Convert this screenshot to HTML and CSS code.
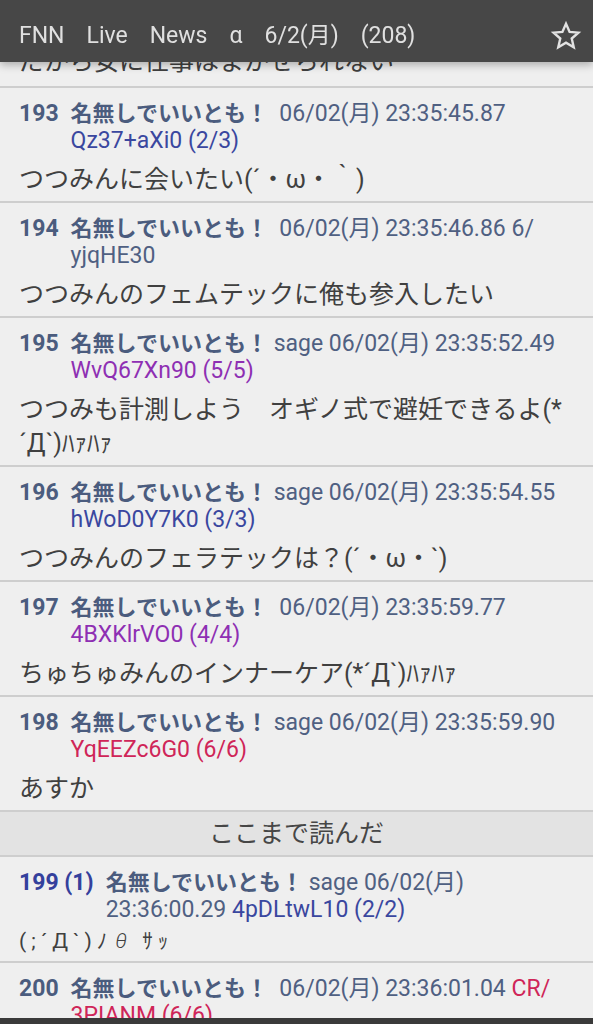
FILE: index.html
```html
<!DOCTYPE html>
<html lang="ja">
<head>
    <meta charset="UTF-8">
    <meta name="viewport" content="width=device-width, initial-scale=1.0">
    <title>FNN Live News α 6/2(月) (208)</title>
    <link rel="stylesheet" href="styles.css">
</head>
<body>

    <header class="appbar">
        <div class="appbar-title">
            <span>FNN</span>
            <span>Live</span>
            <span>News</span>
            <span>α</span>
            <span>6/2(月)</span>
            <span>(208)</span>
        </div>
        <svg class="star" viewBox="0 0 24 24" width="32" height="32">
            <path d="M12 2.8l2.7 6.1 6.6.6-5 4.4 1.5 6.5L12 17l-5.8 3.4 1.5-6.5-5-4.4 6.6-.6z" fill="none" stroke="#e2e2e2" stroke-width="1.8" stroke-linejoin="miter"/>
        </svg>
    </header>

    <main class="thread">

        <div class="res res-cut">
            <div class="res-body">だから女に仕事はまかせられない</div>
        </div>

        <div class="res">
            <div class="res-head">
                <span class="num">193</span>
                <span class="info"><b class="name">名無しでいいとも！</b>&nbsp; <span class="date">06/02(月) 23:35:45.87</span> <span class="id id-blue">Qz37+aXi0 (2/3)</span></span>
            </div>
            <div class="res-body">つつみんに会いたい(´・ω・｀)</div>
        </div>

        <div class="res">
            <div class="res-head">
                <span class="num">194</span>
                <span class="info"><b class="name">名無しでいいとも！</b>&nbsp; <span class="date">06/02(月) 23:35:46.86</span> <span class="id">6/<wbr>yjqHE30</span></span>
            </div>
            <div class="res-body">つつみんのフェムテックに俺も参入したい</div>
        </div>

        <div class="res">
            <div class="res-head">
                <span class="num">195</span>
                <span class="info"><b class="name">名無しでいいとも！</b> <span class="date">sage 06/02(月) 23:35:52.49</span> <span class="id id-purple">WvQ67Xn90 (5/5)</span></span>
            </div>
            <div class="res-body">つつみも計測しよう　オギノ式で避妊できるよ(*´Д`)ﾊｧﾊｧ</div>
        </div>

        <div class="res">
            <div class="res-head">
                <span class="num">196</span>
                <span class="info"><b class="name">名無しでいいとも！</b> <span class="date">sage 06/02(月) 23:35:54.55</span> <span class="id id-blue">hWoD0Y7K0 (3/3)</span></span>
            </div>
            <div class="res-body">つつみんのフェラテックは？(´・ω・`)</div>
        </div>

        <div class="res">
            <div class="res-head">
                <span class="num">197</span>
                <span class="info"><b class="name">名無しでいいとも！</b>&nbsp; <span class="date">06/02(月) 23:35:59.77</span> <span class="id id-purple">4BXKlrVO0 (4/4)</span></span>
            </div>
            <div class="res-body">ちゅちゅみんのインナーケア(*´Д`)ﾊｧﾊｧ</div>
        </div>

        <div class="res">
            <div class="res-head">
                <span class="num">198</span>
                <span class="info"><b class="name">名無しでいいとも！</b> <span class="date">sage 06/02(月) 23:35:59.90</span> <span class="id id-red">YqEEZc6G0 (6/6)</span></span>
            </div>
            <div class="res-body">あすか</div>
        </div>

        <div class="read-mark">ここまで読んだ</div>

        <div class="res">
            <div class="res-head">
                <span class="num num-replied">199 (1)</span>
                <span class="info"><b class="name">名無しでいいとも！</b> <span class="date">sage 06/02(月) 23:36:00.29</span> <span class="id id-blue">4pDLtwL10 (2/2)</span></span>
            </div>
            <div class="res-body res-aa">(;´Д`)ﾉ<span class="theta">θ</span> ｻｯ</div>
        </div>

        <div class="res">
            <div class="res-head">
                <span class="num">200</span>
                <span class="info"><b class="name">名無しでいいとも！</b>&nbsp; <span class="date">06/02(月) 23:36:01.04</span> <span class="id id-red">CR/<wbr>3PIANM (6/6)</span></span>
            </div>
        </div>

    </main>

    <div class="navbar"></div>

</body>
</html>
```

FILE: styles.css
```css
body {
    margin: 0;
    background-color: #efefef;
    font-family: 'Roboto', 'Noto Sans CJK JP', sans-serif;
    color: #404040;
    height: 1024px;
    overflow: hidden;
}
.appbar {
    position: fixed;
    top: 0;
    left: 0;
    right: 0;
    height: 52px;
    padding: 10px 11px 0 19px;
    background-color: #474747;
    box-shadow: 0 3px 8px rgba(0,0,0,0.28);
    display: flex;
    align-items: center;
    justify-content: space-between;
    z-index: 2;
}
.appbar-title {
    display: flex;
    align-items: baseline;
    gap: 22px;
    color: #e0e0e0;
    font-size: 23px;
    line-height: 28px;
}
.star {
    margin-top: 0;
}
.res {
    padding: 12px 19px 4px;
    border-bottom: 2px solid #cecece;
}
.res-cut {
    padding-top: 45px;
    padding-bottom: 7px;
}
.res-head {
    display: flex;
    gap: 12px;
    font-size: 23px;
    line-height: 27px;
    color: #4b5c7e;
}
.num {
    font-weight: bold;
    white-space: nowrap;
}
.num-replied {
    color: #34409c;
}
.name {
    font-weight: bold;
    font-size: 22px;
}
.date {
    color: #4f6082;
}
.id {
    color: #4f6082;
}
.id-blue {
    color: #3a479f;
}
.id-purple {
    color: #8e2fb3;
}
.id-red {
    color: #cf2558;
}
.res-body {
    margin-top: 9px;
    font-size: 25px;
    line-height: 34px;
    color: #404040;
}
.res-cut .res-body {
    margin-top: 0;
}
.res-aa {
    margin-top: 2px;
    font-size: 21px;
    line-height: 32px;
    letter-spacing: 5px;
}
.theta {
    font-style: italic;
    font-weight: 300;
    margin-left: 3px;
}
.read-mark {
    background-color: #e3e3e3;
    border-bottom: 2px solid #cecece;
    text-align: center;
    font-size: 25px;
    line-height: 43px;
    color: #464646;
}
.navbar {
    position: fixed;
    left: 0;
    right: 0;
    bottom: 0;
    height: 6px;
    background-color: #3a3a3a;
}
```
